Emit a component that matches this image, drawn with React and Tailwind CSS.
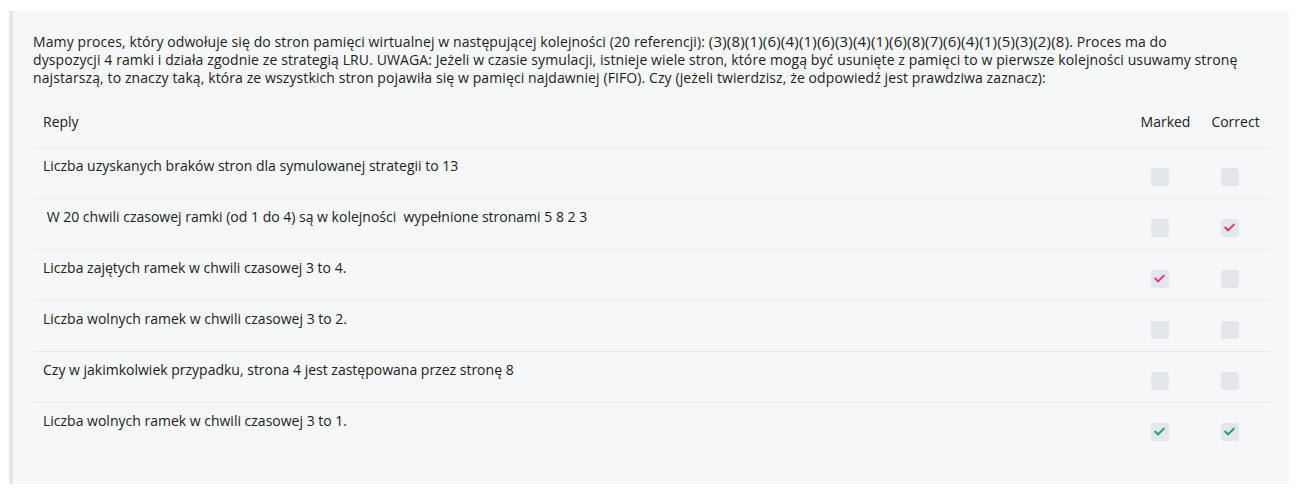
const rows = [
  { text: "Liczba uzyskanych braków stron dla symulowanej strategii to 13", marked: false, correct: false },
  { text: "\u00a0W 20 chwili czasowej ramki (od 1 do 4) są w kolejności \u00a0wypełnione stronami 5 8 2 3", marked: false, correct: true },
  { text: "Liczba zajętych ramek w chwili czasowej 3 to 4.", marked: true, correct: false },
  { text: "Liczba wolnych ramek w chwili czasowej 3 to 2.", marked: false, correct: false },
  { text: "Czy w jakimkolwiek przypadku, strona 4 jest zastępowana przez stronę 8", marked: false, correct: false },
  { text: "Liczba wolnych ramek w chwili czasowej 3 to 1.", marked: true, correct: true, ok: true },
];

const Box = ({ checked, ok }) => (
  <div className="mx-auto w-[18px] h-[18px] rounded-[3px] bg-[#e3e6eb] flex items-center justify-center relative left-[-6px]">
    {checked && (
      <svg width="11" height="9" viewBox="0 0 11 9" fill="none">
        <path
          d="M1.2 4.6 L4.2 7.4 L9.8 1.6"
          stroke={ok ? "#1f9d74" : "#e8336f"}
          strokeWidth="2"
          strokeLinecap="round"
          strokeLinejoin="round"
        />
      </svg>
    )}
  </div>
);

export default function App() {
  return (
    <div className="bg-white min-h-screen pt-[11px] pl-[9px] pr-[15px] pb-[10px] font-['Open_Sans',sans-serif] text-[#222]">
      <div className="bg-[#f6f7f9] border-l-4 border-[#e4e6ea] pl-5 pr-[18px] pt-[21px] pb-[31px]">
        <p className="text-[14px] leading-[18px] tracking-[0.1px]">
          Mamy proces, który odwołuje się do stron pamięci wirtualnej w następującej kolejności (20 referencji):{" "}
          <span className="text-[15px] leading-[18px] tracking-[0.2px]">(3)(8)(1)(6)(4)(1)(6)(3)(4)(1)(6)(8)(7)(6)(4)(1)(5)(3)(2)(8)</span>. Proces ma do
          <br />
          dyspozycji 4 ramki i działa zgodnie ze strategią LRU. UWAGA: Jeżeli w czasie symulacji, istnieje wiele stron, które
          mogą być usunięte z pamięci to w pierwsze kolejności usuwamy stronę
          <br />
          najstarszą, to znaczy taką, która ze wszystkich stron pojawiła się w pamięci najdawniej (FIFO). Czy (jeżeli
          twierdzisz, że odpowiedź jest prawdziwa zaznacz):
        </p>
        <table className="w-full mt-[8px] text-[14px] border-collapse">
          <thead>
            <tr className="h-[52px] border-b border-[#e8eaee]">
              <th className="text-left font-normal pl-[10px] pt-[2px]">Reply</th>
              <th className="font-normal w-[69px] pt-[2px]">Marked</th>
              <th className="font-normal w-[71px] pt-[2px]">Correct</th>
            </tr>
          </thead>
          <tbody>
            {rows.map((r, i) => (
              <tr key={i} className={i < rows.length - 1 ? "border-b border-[#e8eaee]" : ""}>
                <td className="align-top pl-[10px] pt-[9px] leading-[18px] whitespace-pre">{r.text}</td>
                <td className="pt-[20px] pb-[12px]">
                  <Box checked={r.marked} ok={r.ok} />
                </td>
                <td className="pt-[20px] pb-[12px]">
                  <Box checked={r.correct} ok={r.ok} />
                </td>
              </tr>
            ))}
          </tbody>
        </table>
      </div>
    </div>
  );
}
